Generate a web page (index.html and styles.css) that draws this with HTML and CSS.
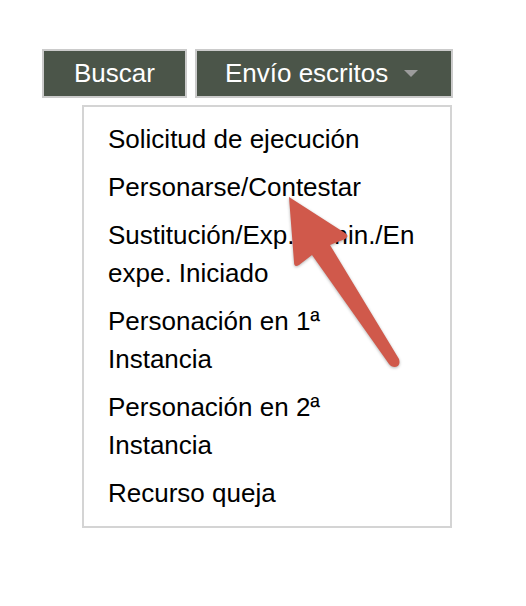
FILE: index.html
```html
<!DOCTYPE html>
<html lang="es">
<head>
<meta charset="utf-8">
<title>Envío escritos</title>
<link rel="stylesheet" href="styles.css">
</head>
<body>
<div class="page">
  <div class="toolbar">
    <button class="btn">Buscar</button>
    <button class="btn btn-dropdown">Envío escritos<span class="caret"></span></button>
  </div>
  <ul class="menu">
    <li class="menu-item">Solicitud de ejecución</li>
    <li class="menu-item">Personarse/Contestar</li>
    <li class="menu-item">Sustitución/Exp.Admin./En expe. Iniciado</li>
    <li class="menu-item">Personación en 1ª Instancia</li>
    <li class="menu-item">Personación en 2ª Instancia</li>
    <li class="menu-item">Recurso queja</li>
  </ul>
</div>
<svg class="annotation" width="526" height="606" viewBox="0 0 526 606" aria-hidden="true">
  <path class="arrow" d="M289,197 L345,233 Q350,236 345,239 L330,245 L399,359 Q401,366 395,367 Q391,367 389,364 L312,255 L299,265 Q294,268 294,262 Z"/>
</svg>
</body>
</html>
```

FILE: styles.css
```css
html, body {
  margin: 0;
  padding: 0;
  background: #ffffff;
}

body {
  font-family: "Liberation Sans", Arial, Helvetica, sans-serif;
  font-size: 26px;
  color: #000;
  width: 526px;
  height: 606px;
  overflow: hidden;
  position: relative;
}

.page {
  padding: 49px 0 0 42px;
}

.toolbar {
  display: flex;
  gap: 8px;
}

.btn {
  font-family: inherit;
  font-size: 26px;
  line-height: 45px;
  height: 49px;
  padding: 0 30px;
  margin: 0;
  color: #ffffff;
  background: #4b5549;
  border: 2px solid #cbcbcb;
  border-radius: 0;
  display: flex;
  align-items: center;
  box-sizing: border-box;
  cursor: pointer;
}

.btn-dropdown {
  padding: 0 33px 0 28px;
}

.caret {
  display: block;
  width: 0;
  height: 0;
  margin-left: 16px;
  border-left: 7px solid transparent;
  border-right: 7px solid transparent;
  border-top: 7px solid #9c9c9c;
}

.menu {
  list-style: none;
  margin: 7px 0 0 40px;
  padding: 8px 26px 9px 24px;
  width: 370px;
  box-sizing: border-box;
  border: 2px solid #d4d4d4;
  background: #ffffff;
}

.menu-item {
  line-height: 38px;
  padding: 5px 0;
}

.annotation {
  position: absolute;
  left: 0;
  top: 0;
  pointer-events: none;
}

.arrow {
  fill: #d0594b;
  filter: drop-shadow(0 1px 1.5px rgba(0, 0, 0, 0.3));
}
```
